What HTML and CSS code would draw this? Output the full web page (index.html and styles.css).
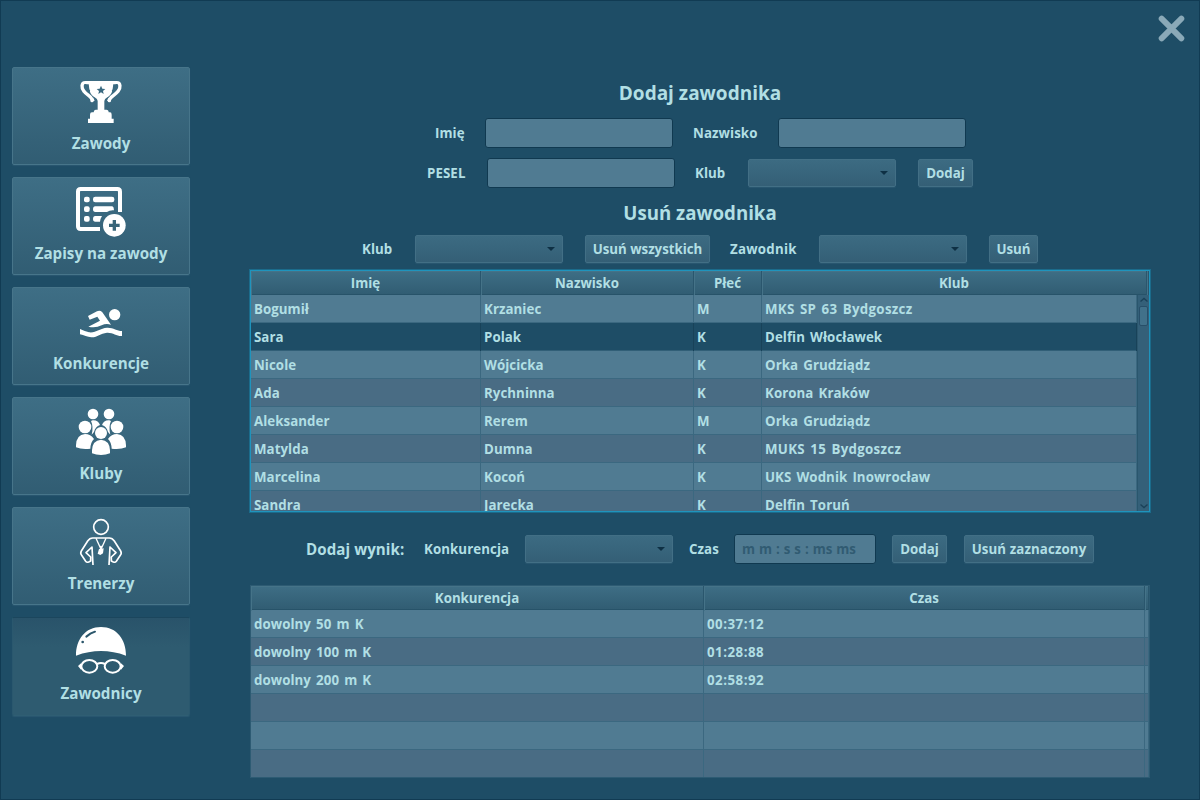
FILE: index.html
```html
<!DOCTYPE html>
<html lang="pl">
<head>
<meta charset="utf-8">
<title>Zawodnicy</title>
<link rel="stylesheet" href="styles.css">
</head>
<body>
<div class="window">
  <nav class="sidebar">
    <button class="nav-item">
      <svg class="nav-icon" viewBox="225 45 156 156" fill="#fff">
        <path d="M266 63H340V70C338 92 336 105 322 112Q313 117 313 123V149H319Q326 149 326 157H330Q335 157 335 164V176H341V189H264V176H270V164Q270 157 276 157H281Q281 149 287 149H293V123Q293 117 284 112C270 105 268 92 266 70Z"/>
        <path d="M270 68H256C244 68 243 83 252 94C260 105 270 107 274 115Q275 121 282 118M336 68H350C362 68 363 83 354 94C346 105 336 107 331 115Q330 121 323 118" fill="none" stroke="#fff" stroke-width="10"/>
        <path d="M254 76Q257 72 260 79Q262 87 269 94M352 76Q349 72 346 79Q344 87 337 94" fill="none" stroke="#3a6a81" stroke-width="5"/>
        <circle cx="276" cy="122" r="5"/><circle cx="328" cy="122" r="5"/>
        <path d="M303 77L307 86 316 87 309 93 311 102 303 97 295 102 297 93 290 87 299 86Z" fill="#3a6a81"/>
      </svg>
      <span>Zawody</span>
    </button>
    <button class="nav-item">
      <svg class="nav-icon" viewBox="225 45 156 156">
        <path d="M300 177H242Q234 177 234 169V65Q234 57 242 57H352Q360 57 360 65V126" fill="none" stroke="#fff" stroke-width="12"/>
        <g fill="#fff"><rect x="252" y="80" width="17" height="17" rx="6"/><rect x="252" y="109" width="17" height="17" rx="6"/><rect x="252" y="138" width="17" height="17" rx="6"/><rect x="279" y="80" width="64" height="17" rx="7"/><path d="M286 109H337Q342 111 342 121Q329 120 321 126H286Q279 126 279 118Q279 109 286 109ZM286 138H306Q301 146 300 155H286Q279 155 279 147Q279 138 286 138Z"/><circle cx="343" cy="166" r="34"/></g>
        <path d="M343 150V182M327 166H359" stroke="#386579" stroke-width="10"/>
      </svg>
      <span>Zapisy na zawody</span>
    </button>
    <button class="nav-item">
      <svg class="nav-icon" viewBox="225 45 156 156" fill="#fff">
        <circle cx="344" cy="104" r="17"/>
        <path d="M264 108L291 94Q300 90 307 97L333 134Q318 129 305 136Q287 145 265 140L300 122 292 110 269 119Z"/>
        <path d="M240 147Q255 154 267 157C287 160 300 144 321 143C340 142 350 153 366 153V168C349 169 340 157 321 158C300 160 292 173 274 172C262 171 252 165 240 163Z"/>
      </svg>
      <span>Konkurencje</span>
    </button>
    <button class="nav-item">
      <svg class="nav-icon" viewBox="225 45 156 156" fill="#fff">
        <circle cx="279" cy="72" r="16"/><circle cx="327" cy="72" r="16"/>
        <path d="M278 91Q295 90 300 105Q286 110 282 126L275 134Q281 110 273 93ZM328 91Q311 90 306 105Q320 110 324 126L331 134Q325 110 333 93Z"/>
        <circle cx="255" cy="111" r="19"/><circle cx="351" cy="111" r="19"/><circle cx="303" cy="129" r="18"/>
        <path d="M228 166Q229 134 255 132Q272 132 282 147Q272 156 271 176Q245 179 228 172ZM378 166Q377 134 351 132Q334 132 324 147Q334 156 335 176Q361 179 378 172Z"/>
        <path d="M276 181Q277 151 303 149Q329 151 330 181V190Q318 195 303 195Q288 195 276 190Z"/>
      </svg>
      <span>Kluby</span>
    </button>
    <button class="nav-item">
      <svg class="nav-icon" viewBox="225 45 156 156" fill="none" stroke="#fff" stroke-width="5" stroke-linejoin="round">
        <circle cx="303" cy="81" r="22"/>
        <path d="M279 195L276 141 258 158 272 171V183L266 186Q260 188 257 184L245 166Q240 160 244 153L263 123Q269 114 278 114H328Q337 114 343 123L362 153Q366 160 361 166L349 184Q346 188 340 186L334 183V171L348 158 330 141 327 195"/>
        <path d="M288 115L303 148 318 115M303 137V149" stroke-width="4"/>
        <path d="M297 147L311 145 309 160 301 165 293 161Z" fill="#fff" stroke="none"/>
      </svg>
      <span>Trenerzy</span>
    </button>
    <button class="nav-item active">
      <svg class="nav-icon" viewBox="225 45 156 156">
        <path d="M228 137C228 88 256 51 303 51S378 88 378 137Q303 109 228 137Z" fill="#fff"/>
        <path d="M259 80L271 71 285 65" fill="none" stroke="#2b566b" stroke-width="6" stroke-linecap="round"/><circle cx="248" cy="96" r="4" fill="#2b566b"/>
        <g fill="none" stroke="#fff" stroke-width="6"><ellipse cx="268" cy="169" rx="24" ry="19"/><ellipse cx="338" cy="169" rx="24" ry="19"/><path d="M291 162Q303 156 315 162"/></g>
        <path d="M234 168L243 160V179ZM372 168L363 160V179Z" fill="#fff"/>
      </svg>
      <span>Zawodnicy</span>
    </button>
  </nav>

  <main class="content">
    <header class="topbar">
      <svg class="close" viewBox="0 0 26 26"><path d="M3.5 3.500L22.500 22.500M22.500 3.500L3.500 22.500" stroke="#8aa9b8" stroke-width="5.600" stroke-linecap="round"/></svg>
    </header>
    <h2 class="title">Dodaj zawodnika</h2>
    <div class="form-row row-name">
      <label class="w-imie">Imię</label><input class="field">
      <label class="w-nazwisko after">Nazwisko</label><input class="field">
    </div>
    <div class="form-row row-pesel">
      <label class="w-pesel">PESEL</label><input class="field">
      <label class="w-klub after">Klub</label><div class="combo"></div>
      <button class="btn b-dodaj spaced">Dodaj</button>
    </div>
    <h2 class="title second">Usuń zawodnika</h2>
    <div class="form-row row-remove">
      <label class="w-klub">Klub</label><div class="combo"></div>
      <button class="btn b-all spaced">Usuń wszystkich</button>
      <label class="w-zawodnik after">Zawodnik</label><div class="combo"></div>
      <button class="btn b-usun spaced">Usuń</button>
    </div>

    <section class="table players">
      <div class="thead"><div>Imię</div><div>Nazwisko</div><div>Płeć</div><div>Klub</div><div></div></div>
      <div class="tbody">
        <div class="rows">
          <div class="tr"><div>Bogumił</div><div>Krzaniec</div><div>M</div><div class="caps">MKS SP 63 Bydgoszcz</div></div>
          <div class="tr selected"><div>Sara</div><div>Polak</div><div>K</div><div>Delfin Włocławek</div></div>
          <div class="tr"><div>Nicole</div><div>Wójcicka</div><div>K</div><div>Orka Grudziądz</div></div>
          <div class="tr"><div>Ada</div><div>Rychninna</div><div>K</div><div>Korona Kraków</div></div>
          <div class="tr"><div>Aleksander</div><div>Rerem</div><div>M</div><div>Orka Grudziądz</div></div>
          <div class="tr"><div>Matylda</div><div>Dumna</div><div>K</div><div class="caps">MUKS 15 Bydgoszcz</div></div>
          <div class="tr"><div>Marcelina</div><div>Kocoń</div><div>K</div><div>UKS Wodnik Inowrocław</div></div>
          <div class="tr"><div>Sandra</div><div>Jarecka</div><div>K</div><div>Delfin Toruń</div></div>
        </div>
        <div class="scrollbar">
          <svg viewBox="0 0 10 10"><path d="M1.500 6.500L5 3.500 8.500 6.500" fill="none" stroke="#1b4259" stroke-width="1.400"/></svg>
          <div class="thumb"></div>
          <svg class="down" viewBox="0 0 10 10"><path d="M1.500 3.500L5 6.500 8.500 3.500" fill="none" stroke="#1b4259" stroke-width="1.400"/></svg>
        </div>
      </div>
    </section>

    <div class="form-row row-result">
      <label class="w-wynik">Dodaj wynik:</label>
      <label class="w-konk">Konkurencja</label><div class="combo"></div>
      <label class="w-czas">Czas</label><input class="field time" placeholder="m m : s s : ms ms">
      <button class="btn b-dodaj near">Dodaj</button>
      <button class="btn b-zazn near">Usuń zaznaczony</button>
    </div>

    <section class="table results">
      <div class="thead"><div>Konkurencja</div><div>Czas</div><div></div></div>
      <div class="rows">
        <div class="tr"><div>dowolny 50 m K</div><div class="digits">00:37:12</div><div></div></div>
        <div class="tr"><div>dowolny 100 m K</div><div class="digits">01:28:88</div><div></div></div>
        <div class="tr"><div>dowolny 200 m K</div><div class="digits">02:58:92</div><div></div></div>
        <div class="tr"><div></div><div></div><div></div></div>
        <div class="tr"><div></div><div></div><div></div></div>
        <div class="tr"><div></div><div></div><div></div></div>
      </div>
    </section>
  </main>
</div>
</body>
</html>
```
FILE: styles.css
```css
* { box-sizing: border-box; }
body {
  margin: 0;
  font: 700 13.3px "Open Sans", "Noto Sans", sans-serif;
  color: #b1dfe4;
}
.window {
  display: flex;
  width: 1200px;
  height: 800px;
  overflow: hidden;
  background: #1e4d66;
  border: 1px solid #113b53;
}
button, input { font: inherit; color: inherit; margin: 0; }
.sidebar {
  display: flex;
  flex-direction: column;
  gap: 12px;
  padding: 66px 0 0 11px;
  width: 249px;
  flex: none;
}
.nav-item {
  display: flex;
  flex-direction: column;
  align-items: center;
  width: 178px;
  height: 98px;
  padding: 7px 0 0;
  border: 1px solid #47758a;
  border-radius: 2px;
  background: linear-gradient(#3e6e85, #315d73);
  box-shadow: 0 1px 1px #2a5870;
  font-size: 15.2px;
  line-height: 22px;
}
.nav-icon { width: 52px; height: 52px; margin-bottom: 5px; display: block; flex: none; }
.nav-item.active {
  height: 99px;
  background: linear-gradient(#29536a, #2e5b70 30%, #2e5b70);
  border-color: #1b465d #2a586e #2f5e73;
}
.content { width: 900px; flex: none; display: flex; flex-direction: column; }
.topbar { height: 79px; display: flex; justify-content: flex-end; padding-top: 14px; margin-right: -35px; flex: none; }
.close { width: 27px; height: 27px; }
.title { margin: 0; height: 26px; line-height: 26px; font-size: 19px; text-align: center; }
.second { margin-top: 12px; font-size: 18.7px; }
.form-row { display: flex; align-items: center; height: 30px; flex: none; white-space: nowrap; }
.row-name { padding-left: 185px; margin-top: 12px; }
.row-pesel { padding-left: 177px; margin-top: 10px; }
.row-remove { padding-left: 112px; margin-top: 8px; }
.row-result { padding-left: 56px; margin-top: 22px; }
.form-row label { flex: none; line-height: 20px; letter-spacing: 0.08px; }
.after { margin-left: 20px; }
.w-imie { width: 50px; }
.w-nazwisko { width: 85px; }
.w-pesel { width: 60px; }
.w-klub { width: 52px; }
.row-remove .w-zawodnik { width: 88px; letter-spacing: 0.25px; }
.form-row .w-wynik { width: 118px; font-size: 15.1px; }
.w-konk { width: 100px; }
.w-czas { width: 45px; margin-left: 15px; }
.field {
  width: 188px;
  height: 30px;
  padding: 0 7px;
  border: 1px solid #103950;
  border-radius: 3px;
  background: #507b92;
  outline: 0;
  flex: none;
}
.field.time { width: 142px; word-spacing: 0.5px; }
.field::placeholder { color: #315b72; opacity: 1; }
.combo, .btn {
  flex: none;
  height: 28px;
  border: 1px solid #426f85;
  border-radius: 2px;
  background: linear-gradient(#3c6b82, #345f76);
  box-shadow: 0 1px 1px #2a5870;
}
.combo { width: 148px; margin: 0 1px; display: flex; align-items: center; justify-content: flex-end; padding-right: 7px; }
.combo::after { content: ""; border: 4px solid transparent; border-top-color: #0e3044; border-bottom: 0; }
.btn { padding: 0; text-align: center; letter-spacing: -0.02px; line-height: 26px; }
.spaced { margin-left: 21px; }
.near { margin-left: 17px; }
.b-dodaj { width: 55px; }
.b-all { width: 125px; }
.b-usun { width: 49px; }
.b-zazn { width: 130px; letter-spacing: 0.1px; }
.row-result .near + .near { margin-left: 17px; }
.row-result .near:not(.near + .near) { margin-left: 16px; }
.table { flex: none; overflow: hidden; }
.thead, .tr { display: grid; }
.thead {
  height: 24px;
  line-height: 25px;
  text-align: center;
  background: linear-gradient(#3e6e85, #315d73);
  border-bottom: 1px solid #275369;
}
.thead > div { border-right: 1px solid #2a566d; box-shadow: inset 1px 1px #457388; }
.tr { height: 28px; line-height: 29px; background: #507b92; border-bottom: 1px solid #3b6880; word-spacing: 1.6px; }
.tr:nth-child(even) { background: #496c84; }
.tr > div { padding-left: 3px; border-right: 1px solid #3b6880; letter-spacing: 0.05px; }
.tr > .caps { letter-spacing: 0.3px; }
.tr > .digits { letter-spacing: 0.5px; }
.players {
  width: 900px;
  height: 242px;
  margin-top: 6px;
  border: 1px solid #1f94bd;
  box-shadow: 0 0 0 1px #1b6b8b;
}
.players .thead { grid-template-columns: 230px 213px 68px 385px 1fr; }
.players .tr { grid-template-columns: 230px 213px 68px 1fr; }
.tbody { display: flex; height: 216px; }
.players .rows { flex: 1; }
.players .tr.selected { background: #1e4d66; border-bottom-color: #315f77; }
.players .tr.selected > div { border-color: #184259; }
.scrollbar {
  width: 12px;
  display: flex;
  flex-direction: column;
  align-items: center;
  background: #346079;
  border-left: 1px solid #2a566d;
}
.scrollbar svg { width: 10px; height: 10px; flex: none; }
.thumb { width: 9px; height: 20px; margin-top: 1px; border: 1px solid #284f69; border-radius: 2px; background: #41718a; }
.down { margin-top: auto; }
.results { width: 900px; height: 193px; margin-top: 21px; border: 1px solid #2d5b73; }
.results .thead, .results .tr { grid-template-columns: 453px 441px 1fr; }
```
